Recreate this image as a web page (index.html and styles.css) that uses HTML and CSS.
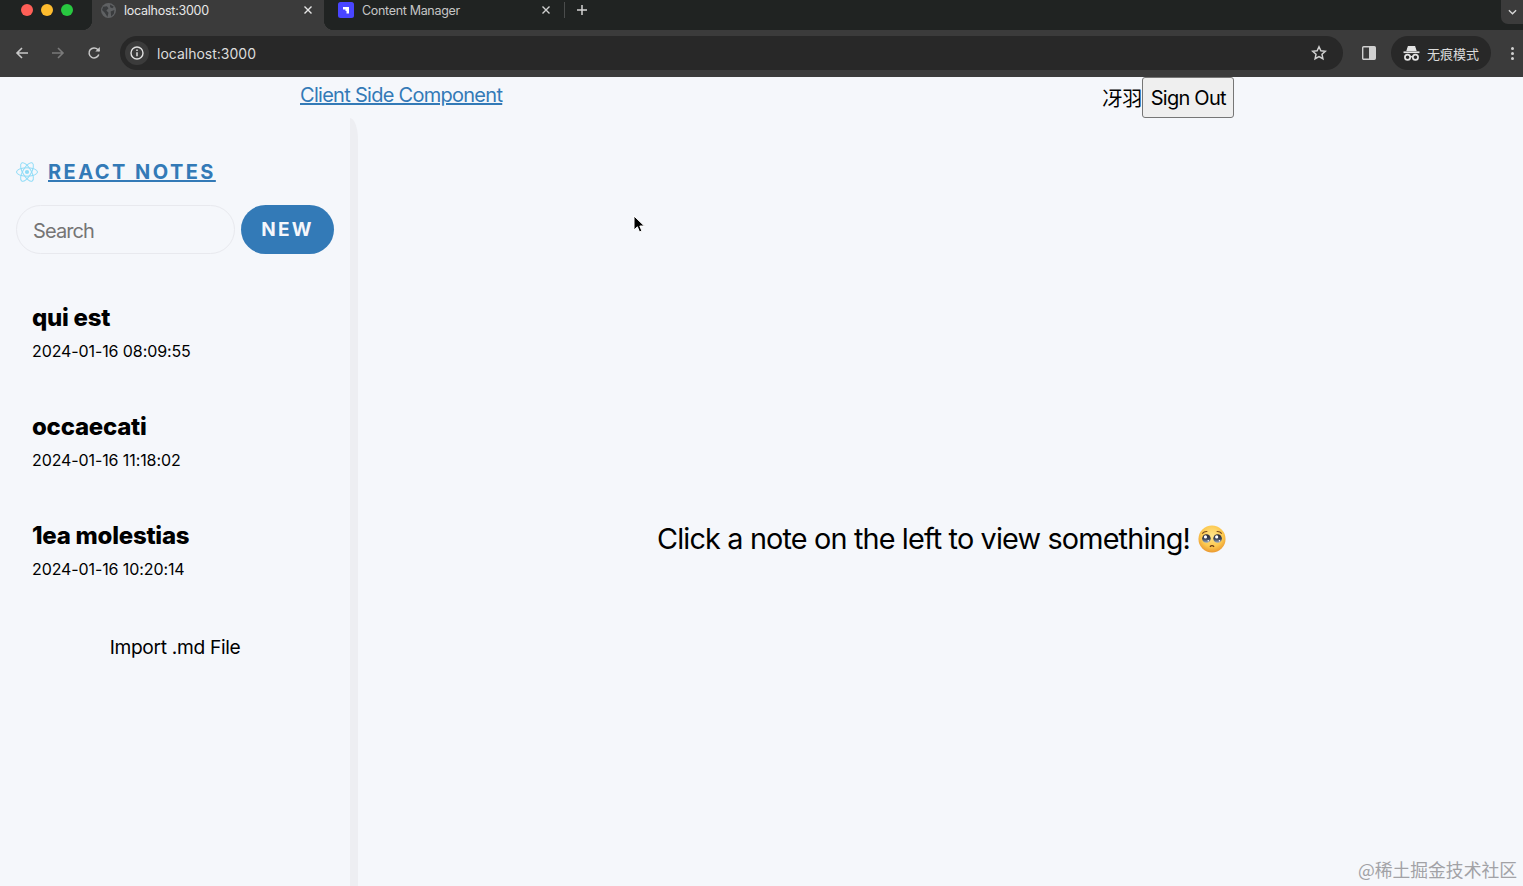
FILE: index.html
```html
<!DOCTYPE html>
<html lang="zh">
<head>
<meta charset="utf-8">
<title>React Notes</title>
<link rel="stylesheet" href="styles.css">
</head>
<body>
<div class="browser">
  <div class="tabstrip">
    <div class="traffic">
      <span class="dot dot-red"></span><span class="dot dot-yellow"></span><span class="dot dot-green"></span>
    </div>
    <div class="tab tab-active">
      <svg class="favicon" viewBox="0 0 14 14"><circle cx="7" cy="7" r="7" fill="#5f6163"/><path d="M2 3.500 5.500 3 7 5 5 7l2 2-1 4L3.500 9 1 6.500zM8.500 1.500 12 3.500 10.500 5 8.500 4zM9 8l3.500-1.500L12 10l-2.500 2.500z" fill="#3a3c3e"/></svg>
      <span class="tab-title">localhost:3000</span>
      <svg class="tab-close" viewBox="0 0 10 10"><path d="M1.500 1.500l7 7M8.500 1.500l-7 7" stroke="#e6e6e6" stroke-width="1.400" fill="none"/></svg>
    </div>
    <div class="tab tab-inactive">
      <svg class="favicon" viewBox="0 0 16 16"><rect width="16" height="16" rx="2.500" fill="#4945ff"/><path d="M5 5h6v6.500H8.500V9H7.500V7.500H5z" fill="#fff"/></svg>
      <span class="tab-title tab-title-dim">Content Manager</span>
      <svg class="tab-close" viewBox="0 0 10 10"><path d="M1.500 1.500l7 7M8.500 1.500l-7 7" stroke="#d0d0d0" stroke-width="1.400" fill="none"/></svg>
    </div>
    <span class="tab-sep"></span>
    <svg class="tab-new" viewBox="0 0 12 12"><path d="M6 1v10M1 6h10" stroke="#d4d4d4" stroke-width="1.500" fill="none"/></svg>
    <div class="tab-menu"><svg viewBox="0 0 10 6" class="tab-menu-icon"><path d="M1 1l4 4 4-4" stroke="#d8d8d8" stroke-width="1.500" fill="none"/></svg></div>
  </div>
  <div class="toolbar">
    <svg class="nav-icon" viewBox="0 0 14 14"><path d="M13 7H2M7 2 2 7l5 5" stroke="#c8c8c8" stroke-width="1.600" fill="none"/></svg>
    <svg class="nav-icon" viewBox="0 0 14 14"><path d="M1 7h11M7 2l5 5-5 5" stroke="#7a7a7a" stroke-width="1.600" fill="none"/></svg>
    <svg class="nav-icon" viewBox="0 0 14 14"><path d="M11.800 8.500A5 5 0 1 1 10.800 3.600L12.300 5" stroke="#c8c8c8" stroke-width="1.500" fill="none"/><path d="M12.800 1v4.500H8.300z" fill="#c8c8c8"/></svg>
    <div class="omnibox">
      <span class="info-chip"><svg class="info-icon" viewBox="0 0 14 14"><circle cx="7" cy="7" r="6" stroke="#e0e0e0" stroke-width="1.400" fill="none"/><path d="M7 6.200v4M7 3.500v1.400" stroke="#e0e0e0" stroke-width="1.500"/></svg></span>
      <span class="url">localhost:3000</span>
      <svg class="star" viewBox="0 0 16 16"><path d="M8 1.800l1.900 4 4.400.5-3.300 3 .9 4.400L8 11.500l-3.900 2.200.9-4.400-3.300-3 4.400-.5z" stroke="#d0d0d0" stroke-width="1.500" fill="none"/></svg>
    </div>
    <svg class="panel-icon" viewBox="0 0 14 14"><rect x=".7" y=".7" width="12.600" height="12.600" rx="1" stroke="#d0d0d0" stroke-width="1.400" fill="none"/><rect x="7" y="1" width="6" height="12" fill="#d0d0d0"/></svg>
    <div class="incognito">
      <svg class="incognito-icon" viewBox="0 0 16 15"><path d="M5 1.500h6l1.200 3.500H3.800z" fill="#e4e4e4" stroke="#e4e4e4" stroke-width="1"/><path d="M.5 6.800h15" stroke="#e4e4e4" stroke-width="1.600"/><circle cx="4.300" cy="11.500" r="2.500" stroke="#e4e4e4" stroke-width="1.600" fill="none"/><circle cx="11.700" cy="11.500" r="2.500" stroke="#e4e4e4" stroke-width="1.600" fill="none"/><path d="M6.800 11h2.400" stroke="#e4e4e4" stroke-width="1.300"/></svg>
      <span class="incognito-label">无痕模式</span>
    </div>
    <div class="kebab"><span></span><span></span><span></span></div>
  </div>
</div>

<div class="page">
  <header class="topbar">
    <a class="client-link" href="#">Client Side Component</a>
    <div class="user">
      <span class="user-name">冴羽</span>
      <button class="signout" type="button">Sign Out</button>
    </div>
  </header>
  <div class="app">
    <aside class="sidebar">
      <a class="brand" href="#">
        <svg class="logo" viewBox="-12 -12 24 24">
          <g fill="none" stroke="#8fdcf7" stroke-width="1">
            <ellipse rx="10.500" ry="4.200"/>
            <ellipse rx="10.500" ry="4.200" transform="rotate(60)"/>
            <ellipse rx="10.500" ry="4.200" transform="rotate(120)"/>
          </g>
          <circle r="2.100" fill="#8fdcf7"/>
        </svg>
        <span class="brand-text">REACT NOTES</span>
      </a>
      <div class="search-row">
        <div class="search-box"><input class="search" type="text" placeholder="Search"></div>
        <button class="new-btn" type="button">NEW</button>
      </div>
      <ul class="notes">
        <li class="note"><h2 class="note-title">qui est</h2><p class="note-date">2024-01-16 08:09:55</p></li>
        <li class="note"><h2 class="note-title">occaecati</h2><p class="note-date">2024-01-16 11:18:02</p></li>
        <li class="note"><h2 class="note-title">1ea molestias</h2><p class="note-date">2024-01-16 10:20:14</p></li>
      </ul>
      <div class="import">Import .md File</div>
    </aside>
    <main class="main">
      <div class="empty">
        <span>Click a note on the left to view something!</span>
        <svg class="emoji" viewBox="0 0 30 30">
          <defs>
            <radialGradient id="face" cx=".5" cy=".38" r=".68"><stop offset="0" stop-color="#ffe58a"/><stop offset=".6" stop-color="#fcc84f"/><stop offset="1" stop-color="#e58a26"/></radialGradient>
            <linearGradient id="eye" x1="0" y1="0" x2="0" y2="1"><stop offset="0" stop-color="#2a2730"/><stop offset=".55" stop-color="#3d4658"/><stop offset="1" stop-color="#9fb0c8"/></linearGradient>
          </defs>
          <circle cx="15" cy="15" r="14.500" fill="url(#face)"/>
          <circle cx="9" cy="14.500" r="4.600" fill="url(#eye)"/><circle cx="21" cy="14.500" r="4.600" fill="url(#eye)"/>
          <circle cx="8" cy="12.800" r="1.700" fill="#fff"/><circle cx="20" cy="12.800" r="1.700" fill="#fff"/>
          <circle cx="11" cy="17" r=".8" fill="#fff"/><circle cx="23" cy="17" r=".8" fill="#fff"/>
          <path d="M4.500 9.200Q6.800 6.500 10 7M25.500 9.200Q23.200 6.500 20 7" stroke="#7a4a1c" stroke-width="1.200" fill="none"/>
          <path d="M12.800 23.200Q15 21 17.200 23.200" stroke="#6b3a14" stroke-width="1.500" fill="none"/>
        </svg>
      </div>
    </main>
  </div>
  <svg class="cursor" viewBox="0 0 12 18"><path d="M1 1v14l3.400-3.200L6.500 17l2.400-1-2.100-5h4.600z" fill="#000" stroke="#fff" stroke-width="1"/></svg>
  <div class="watermark">@稀土掘金技术社区</div>
</div>
</body>
</html>
```

FILE: styles.css
```css
* { box-sizing: border-box; }
html, body { margin: 0; height: 100%; overflow: hidden; }
body {
  display: flex;
  flex-direction: column;
  height: 886px;
  background: #f5f7fb;
  font-family: Inter, "Noto Sans CJK SC", sans-serif;
  color: #000;
}

/* browser chrome */
.browser { flex: none; height: 77px; background: #3b3b3b; font-family: Inter, "Noto Sans CJK SC", sans-serif; }
.tabstrip { display: flex; align-items: center; height: 30px; background: #202322; position: relative; }
.traffic { display: flex; gap: 8px; width: 92px; padding-left: 21px; padding-bottom: 10px; }
.dot { width: 12px; height: 12px; border-radius: 50%; }
.dot-red { background: #ff5f57; }
.dot-yellow { background: #febc2e; }
.dot-green { background: #28c840; }
.tab { display: flex; align-items: center; height: 30px; padding-left: 9px; padding-right: 11px; padding-bottom: 10px; position: relative; }
.tab-active { width: 232px; background: #3b3b3b; }
.tab-active::before, .tab-active::after { content: ""; position: absolute; bottom: 0; width: 10px; height: 10px; }
.tab-active::before { left: -10px; background: radial-gradient(circle at 0 0, transparent 10px, #3b3b3b 10.500px); }
.tab-active::after { right: -10px; background: radial-gradient(circle at 100% 0, transparent 10px, #3b3b3b 10.500px); }
.tab-inactive { width: 241px; padding-left: 14px; padding-right: 14px; }
.favicon { width: 15px; height: 15px; flex: none; }
.tab-inactive .favicon { width: 16px; height: 16px; }
.tab-title { flex: 1; margin-left: 8px; font-size: 12.500px; letter-spacing: -.25px; color: #e8e8e8; white-space: nowrap; }
.tab-title-dim { color: #c6c6c6; letter-spacing: -.32px; }
.tab-close { width: 10px; height: 10px; flex: none; }
.tab-sep { width: 1px; height: 16px; background: #4a4c4c; margin-bottom: 10px; margin-left: -1px; }
.tab-new { width: 12px; height: 12px; margin-left: 11px; margin-bottom: 10px; }
.tab-menu { margin-left: auto; width: 22px; height: 24px; background: #3b3b3b; border-radius: 0 0 0 7px; align-self: flex-start; display: flex; align-items: center; justify-content: center; }
.tab-menu-icon { width: 9px; height: 6px; }

.toolbar { display: flex; align-items: center; height: 47px; padding-left: 15px; padding-bottom: 1px; }
.nav-icon { width: 14px; height: 14px; margin-right: 22px; flex: none; }
.nav-icon:nth-child(3) { margin-right: 19px; }
.omnibox { display: flex; align-items: center; width: 1223px; height: 34px; background: #282828; border-radius: 17px; padding: 0 16px 0 5px; }
.info-chip { display: flex; align-items: center; justify-content: center; width: 24px; height: 24px; border-radius: 50%; background: #3b3b3b; }
.info-icon { width: 14px; height: 14px; }
.url { flex: 1; margin-left: 8px; font-size: 14px; color: #dcdcdc; }
.star { width: 16px; height: 16px; }
.panel-icon { width: 14px; height: 14px; margin-left: 19px; flex: none; }
.incognito { display: flex; align-items: center; width: 100px; height: 34px; margin-left: 15px; padding-left: 12px; background: #282828; border-radius: 17px; }
.incognito-icon { width: 17px; height: 16px; }
.incognito-label { margin-left: 7px; font-size: 13px; color: #dcdcdc; }
.kebab { display: flex; flex-direction: column; gap: 2px; margin-left: 20px; }
.kebab span { width: 3px; height: 3px; border-radius: 50%; background: #d0d0d0; }

/* page */
.page { flex: 1; display: flex; flex-direction: column; position: relative; min-height: 0; }
.topbar { flex: none; display: flex; align-items: flex-start; height: 41px; padding-left: 300px; }
.client-link { margin-top: 4px; font-size: 20px; letter-spacing: -.72px; line-height: 29px; color: #337ab7; }
.user { display: flex; align-items: center; margin-left: 600px; }
.user-name { font-size: 20px; font-family: "Noto Sans CJK SC", sans-serif; }
.signout {
  width: 92px; height: 41px; padding: 0;
  font: 20px Inter, sans-serif; letter-spacing: -.75px; color: #000;
  background: #efefef; border: 1px solid #767676; border-radius: 3px;
}
.app { flex: 1; display: flex; min-height: 0; }
.sidebar {
  flex: none; width: 350px; padding: 40px 16px 0;
  background: #f5f7fb;
  position: relative;
}
.sidebar::after {
  content: ""; position: absolute; left: 100%; top: 0; bottom: 0; width: 8px;
  background: #edeef2; border-top-right-radius: 8px 22px;
}
.brand { display: flex; align-items: center; height: 28px; color: #337ab7; }
.logo { width: 24px; height: 24px; flex: none; margin-left: -1px; }
.brand-text { margin-left: 9px; font-size: 20px; font-weight: 700; letter-spacing: 2.450px; line-height: 26px; }
.search-row { display: flex; justify-content: space-between; margin-top: 19px; }
.search-box { width: 219px; }
.search {
  display: block; width: 100%; height: 49px; padding: 3px 16px 0;
  font: 20px Inter, sans-serif; letter-spacing: -.9px; color: #000;
  background: #f5f7fb; border: 1px solid #e8e9ee; border-radius: 25px; outline: none;
}
.search::placeholder { color: #757575; opacity: 1; }
.new-btn {
  width: 93px; height: 49px; padding: 0;
  font: 700 19px Inter, sans-serif; letter-spacing: 2.200px; color: #f5f7fb;
  background: #337ab7; border: 0; border-radius: 25px;
}
.notes { list-style: none; margin: 33px 0 0; padding: 0; }
.note { height: 109px; padding: 14px 16px 0; }
.note-title { margin: 0; font-size: 24px; line-height: 34px; font-weight: 800; letter-spacing: -.25px; }
.note-date { margin: 6px 0 0; font-size: 16px; letter-spacing: -.1px; line-height: 20px; }
.import { margin-top: 20px; text-align: center; font-size: 19.200px; letter-spacing: -.33px; line-height: 26px; }
.main { flex: 1; display: flex; align-items: center; justify-content: center; padding-left: 10px; padding-bottom: 2px; padding-top: 76px; }
.empty { display: flex; align-items: center; gap: 8px; font-size: 28.800px; letter-spacing: -.84px; line-height: 36px; }
.emoji { width: 28px; height: 28px; flex: none; }
.cursor { position: absolute; left: 633px; top: 138px; width: 12px; height: 18px; }
.watermark { position: absolute; right: 6px; bottom: 6px; font-size: 17.800px; line-height: 22px; color: #a2a2a6; font-family: "Noto Sans CJK SC", sans-serif; }
```
